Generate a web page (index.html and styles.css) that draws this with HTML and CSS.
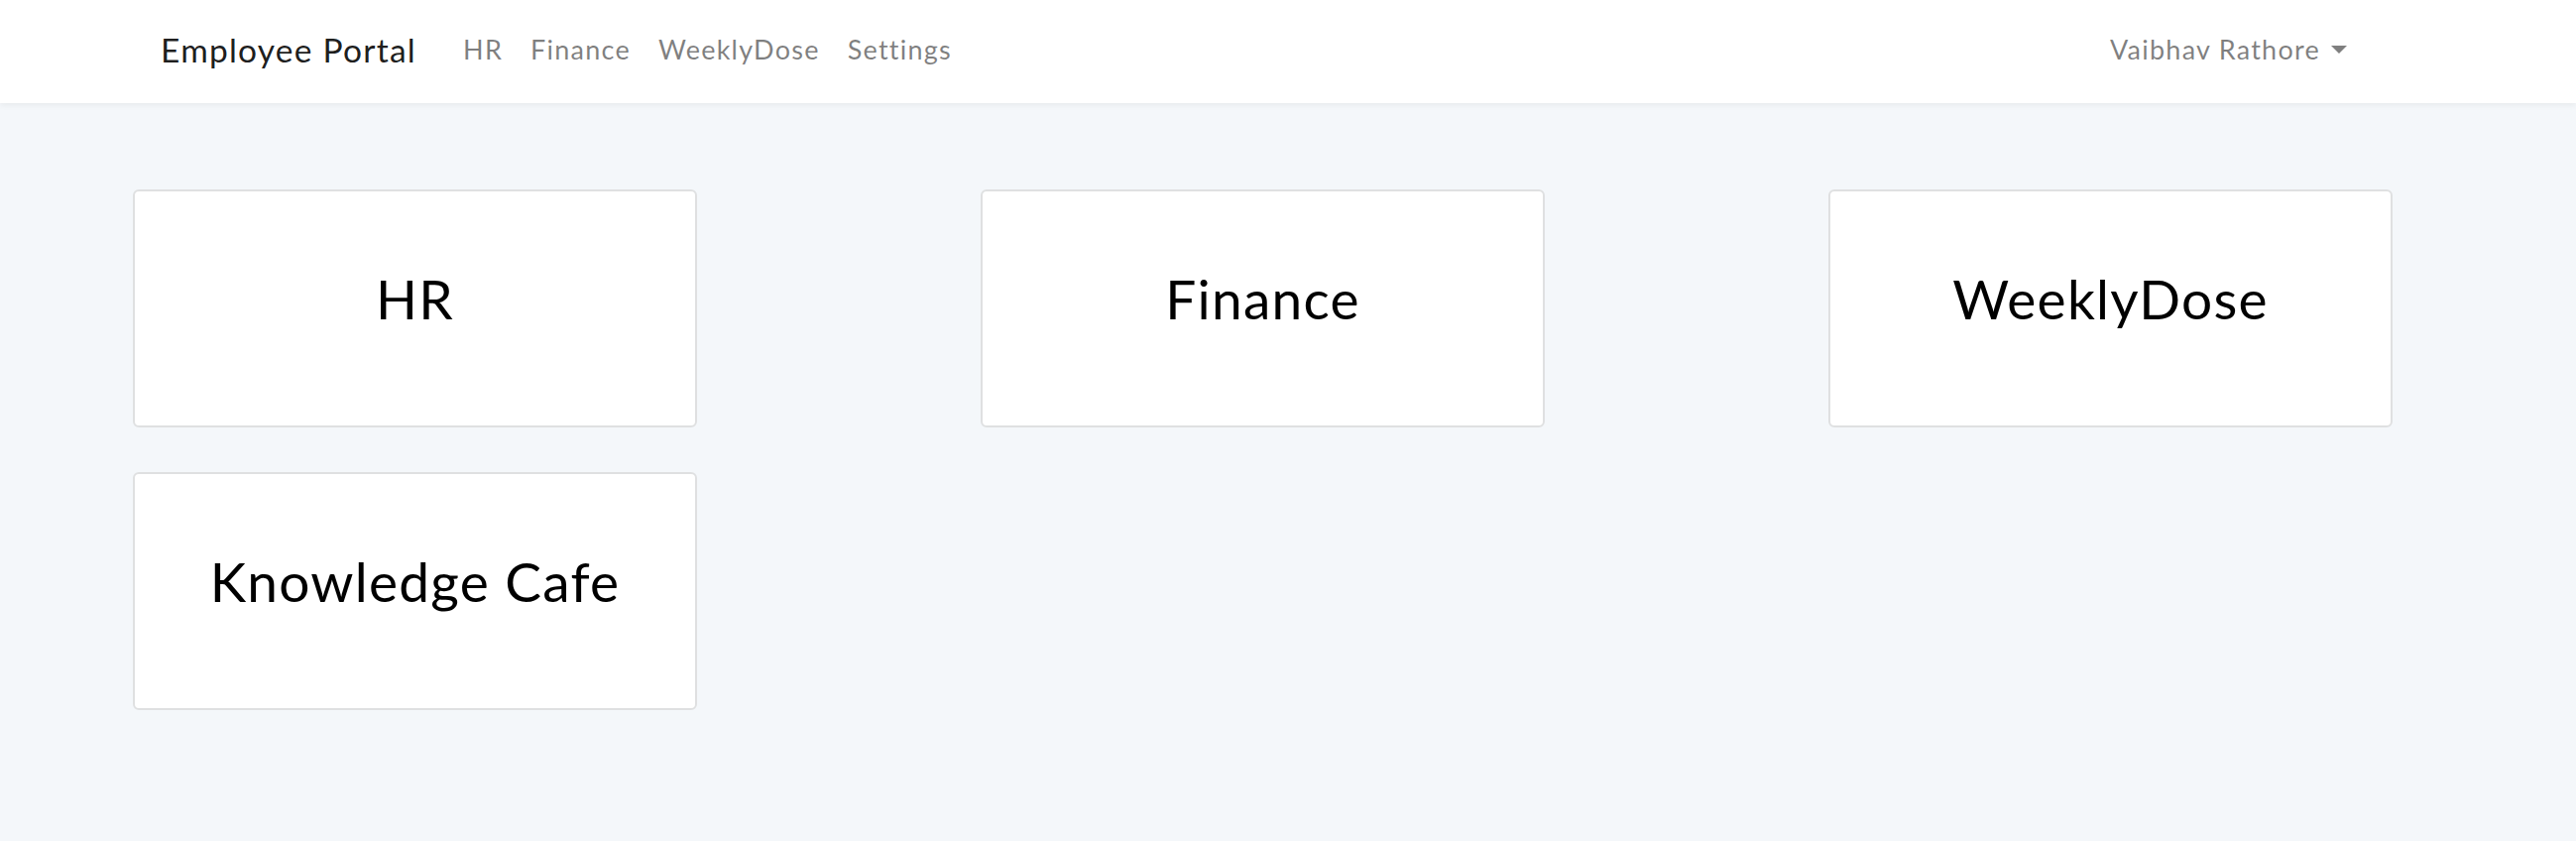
FILE: index.html
```html
<!DOCTYPE html>
<html lang="en">
<head>
<meta charset="utf-8">
<title>Employee Portal</title>
<link rel="stylesheet" href="styles.css">
</head>
<body>
<nav class="navbar">
  <div class="nav-left">
    <a class="brand" href="#">Employee Portal</a>
    <ul class="nav-links">
      <li><a class="nav-link" href="#">HR</a></li>
      <li><a class="nav-link" href="#">Finance</a></li>
      <li><a class="nav-link" href="#">WeeklyDose</a></li>
      <li><a class="nav-link" href="#">Settings</a></li>
    </ul>
  </div>
  <a class="nav-link user" href="#">Vaibhav Rathore<span class="caret"></span></a>
</nav>
<main class="tiles">
  <a class="tile" href="#">HR</a>
  <a class="tile" href="#">Finance</a>
  <a class="tile" href="#">WeeklyDose</a>
  <a class="tile" href="#">Knowledge Cafe</a>
</main>
</body>
</html>
```
FILE: styles.css
```css
* { box-sizing: border-box; }
html, body { margin: 0; padding: 0; }
body {
  background: #f4f7fa;
  font-family: Lato, "Open Sans", sans-serif;
  letter-spacing: 0.078em;
  min-height: 848px;
}
a { text-decoration: none; }
.navbar {
  height: 104px;
  background: #fff;
  box-shadow: 0 2px 6px rgba(0,0,0,0.06);
  display: flex;
  align-items: center;
  justify-content: space-between;
  padding: 0 217px 5px 162px;
}
.nav-left { display: flex; align-items: center; }
.brand {
  font-size: 33.5px;
  color: rgba(0,0,0,0.9);
  margin-right: 33px;
}
.nav-links { list-style: none; margin: 0; padding: 0; display: flex; }
.nav-link {
  display: block;
  font-size: 27px;
  color: rgba(0,0,0,0.5);
  padding: 0 14px;
}
.user { display: flex; align-items: center; }
.caret {
  display: inline-block;
  margin-left: 11px;
  width: 0; height: 0;
  border-left: 8px solid transparent;
  border-right: 8px solid transparent;
  border-top: 8px solid rgba(0,0,0,0.5);
}
.tiles {
  width: 2279px;
  margin: 87px 0 0 134px;
  display: grid;
  grid-template-columns: repeat(3, 569px);
  justify-content: space-between;
  row-gap: 45px;
}
.tile {
  height: 240px;
  background: #fff;
  border: 2px solid #dfe0e1;
  border-radius: 6px;
  display: flex;
  align-items: center;
  justify-content: center;
  padding-bottom: 21px;
  font-size: 55px;
  color: #000;
}
```
